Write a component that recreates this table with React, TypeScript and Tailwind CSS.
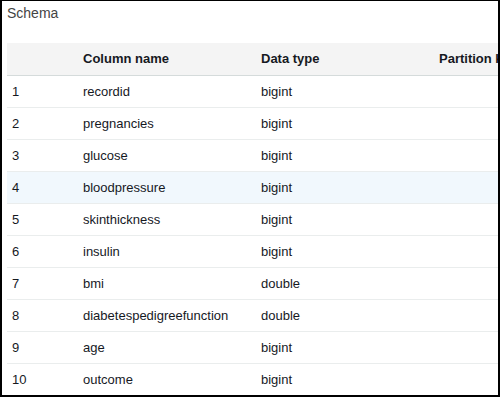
const ROWS: [number, string, string][] = [
  [1, 'recordid', 'bigint'],
  [2, 'pregnancies', 'bigint'],
  [3, 'glucose', 'bigint'],
  [4, 'bloodpressure', 'bigint'],
  [5, 'skinthickness', 'bigint'],
  [6, 'insulin', 'bigint'],
  [7, 'bmi', 'double'],
  [8, 'diabetespedigreefunction', 'double'],
  [9, 'age', 'bigint'],
  [10, 'outcome', 'bigint'],
];

const GRID_CLASS = 'grid w-[640px] grid-cols-[71px_178px_178px_213px] items-center';

export default function App() {
  return (
    <div
      className="h-[397px] w-[500px] overflow-hidden border-b-2 border-l-2 border-r-2 border-t border-black bg-white text-[#16191f]"
      style={{ fontFamily: '"Liberation Sans", Arial, sans-serif' }}
    >
      <div className="h-[42px] pl-[5px] pt-[4px] text-[14px] leading-4 text-[#444]">Schema</div>
      <div className="pl-[5px]">
        <div className={`${GRID_CLASS} h-[33px] border-b border-[#d5dbdb] bg-[#f4f4f4] text-[13px] font-bold`}>
          <div />
          <div className="pl-[5px]">Column name</div>
          <div className="pl-[5px]">Data type</div>
          <div className="pl-[5px]">Partition key</div>
        </div>
        {ROWS.map(([num, name, type]) => (
          <div
            key={num}
            className={`${GRID_CLASS} h-[32px] border-b border-[#eaeded] text-[13px] ${num === 4 ? 'bg-[#f1f8fd]' : ''}`}
          >
            <div className="pl-[5px]">{num}</div>
            <div className="pl-[5px]">{name}</div>
            <div className="pl-[5px]">{type}</div>
            <div />
          </div>
        ))}
      </div>
    </div>
  );
}
